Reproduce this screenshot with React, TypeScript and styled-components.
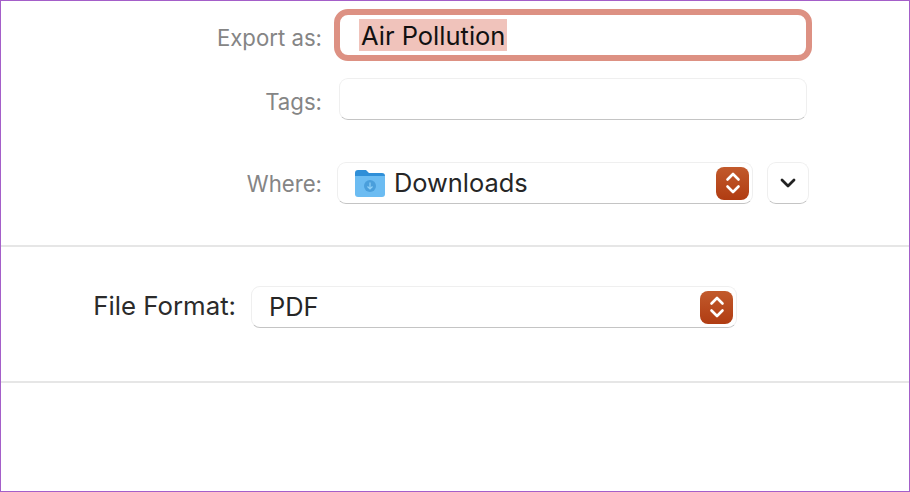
import React from "react";
import styled, { createGlobalStyle } from "styled-components";

const GlobalStyle = createGlobalStyle`
  html, body {
    margin: 0;
    padding: 0;
    background: #fff;
  }
  * {
    box-sizing: border-box;
  }
`;

const Frame = styled.div`
  display: flex;
  flex-direction: column;
  width: 910px;
  height: 492px;
  overflow: hidden;
  background: #fff;
  border: 1px solid #a45fc9;
  font-family: Inter, "Noto Sans", sans-serif;
`;

const TopSection = styled.section`
  display: flex;
  flex-direction: column;
  height: 244px;
  padding-top: 8px;
  flex-shrink: 0;
`;

const Row = styled.div<{ $mt?: number }>`
  display: flex;
  align-items: center;
  margin-top: ${(p) => p.$mt ?? 0}px;
`;

const Label = styled.label<{ $pt?: number }>`
  width: 321px;
  padding-top: ${(p) => p.$pt ?? 0}px;
  text-align: right;
  font-size: 22.2px;
  color: #858585;
  flex-shrink: 0;
`;

const FocusedField = styled.div`
  display: flex;
  align-items: center;
  width: 478px;
  height: 52px;
  margin-left: 12px;
  padding-left: 19px;
  border: 6px solid #dd9183;
  border-radius: 14px;
  background: #fff;
`;

const Selected = styled.span`
  padding: 1px 2px 0;
  background: #f0c3bb;
  color: #111;
  font-size: 25.5px;
  line-height: 31px;
`;

const TagsField = styled.div`
  width: 468px;
  height: 42px;
  margin-left: 17px;
  border: 1px solid #efefef;
  border-bottom: 1.5px solid #c4c4c4;
  border-radius: 9px;
  background: #fff;
`;

const Select = styled.div<{ $width: number; $ml: number; $pl: number }>`
  display: flex;
  align-items: center;
  width: ${(p) => p.$width}px;
  height: 42px;
  margin-left: ${(p) => p.$ml}px;
  padding-left: ${(p) => p.$pl}px;
  padding-right: 3px;
  border: 1px solid #efefef;
  border-bottom: 1.5px solid #c4c4c4;
  border-radius: 9px;
  background: #fff;
`;

const SelectText = styled.span`
  flex: 1;
  padding-bottom: 2px;
  color: #262626;
  font-size: 25.4px;
`;

const Stepper = styled.span`
  display: flex;
  align-items: center;
  justify-content: center;
  width: 33px;
  height: 33px;
  border-radius: 8px;
  background: linear-gradient(#c25a2c, #b03c12);
`;

const FolderIcon = styled.svg`
  width: 30px;
  height: 28px;
  margin-right: 9px;
  flex-shrink: 0;
`;

const DisclosureButton = styled.button`
  display: flex;
  align-items: center;
  justify-content: center;
  width: 42px;
  height: 42px;
  margin-left: 14px;
  padding: 0;
  border: 1px solid #efefef;
  border-bottom: 1.5px solid #c4c4c4;
  border-radius: 9px;
  background: #fff;
`;

const Divider = styled.hr`
  width: 100%;
  height: 2px;
  margin: 0;
  border: 0;
  background: #e6e6e6;
  flex-shrink: 0;
`;

const FormatSection = styled.section`
  display: flex;
  align-items: center;
  height: 134px;
  padding-bottom: 14px;
  flex-shrink: 0;
`;

const FormatLabel = styled.label`
  width: 235px;
  padding-bottom: 3px;
  text-align: right;
  font-size: 25.8px;
  color: #2b2b2b;
  flex-shrink: 0;
`;

const StepperIcon = () => (
  <Stepper>
    <svg width="20" height="26" viewBox="0 0 20 26" fill="none" stroke="#fff" strokeWidth="2.6" strokeLinecap="round" strokeLinejoin="round">
      <path d="M4.5 9.5 10 4l5.5 5.5" />
      <path d="M4.5 16.5 10 22l5.5-5.5" />
    </svg>
  </Stepper>
);

export default function App() {
  return (
    <>
      <GlobalStyle />
      <Frame>
        <TopSection>
          <Row>
            <Label $pt={4}>Export as:</Label>
            <FocusedField>
              <Selected>Air Pollution</Selected>
            </FocusedField>
          </Row>
          <Row $mt={17}>
            <Label $pt={4}>Tags:</Label>
            <TagsField />
          </Row>
          <Row $mt={42}>
            <Label>Where:</Label>
            <Select $width={416} $ml={15} $pl={17}>
              <FolderIcon viewBox="0 0 30 28">
                <path d="M0 4a3 3 0 0 1 3-3h8l3 3h13a3 3 0 0 1 3 3v5H0z" fill="#2f8fd8" />
                <path d="M0 7h30v18a3 3 0 0 1-3 3H3a3 3 0 0 1-3-3z" fill="#6cbcf2" />
                <circle cx="15" cy="17" r="6" fill="#4a9fdc" />
                <path d="M15 13.5v6M12.5 17.5l2.5 2.5 2.5-2.5" stroke="#8fd0f7" strokeWidth="1.2" fill="none" />
              </FolderIcon>
              <SelectText>Downloads</SelectText>
              <StepperIcon />
            </Select>
            <DisclosureButton aria-label="Show more">
              <svg width="16" height="10" viewBox="0 0 16 10" fill="none" stroke="#222" strokeWidth="2.8" strokeLinecap="round" strokeLinejoin="round">
                <path d="M2 2l6 6 6-6" />
              </svg>
            </DisclosureButton>
          </Row>
        </TopSection>
        <Divider />
        <FormatSection>
          <FormatLabel>File Format:</FormatLabel>
          <Select $width={486} $ml={15} $pl={17}>
            <SelectText>PDF</SelectText>
            <StepperIcon />
          </Select>
        </FormatSection>
        <Divider />
      </Frame>
    </>
  );
}
